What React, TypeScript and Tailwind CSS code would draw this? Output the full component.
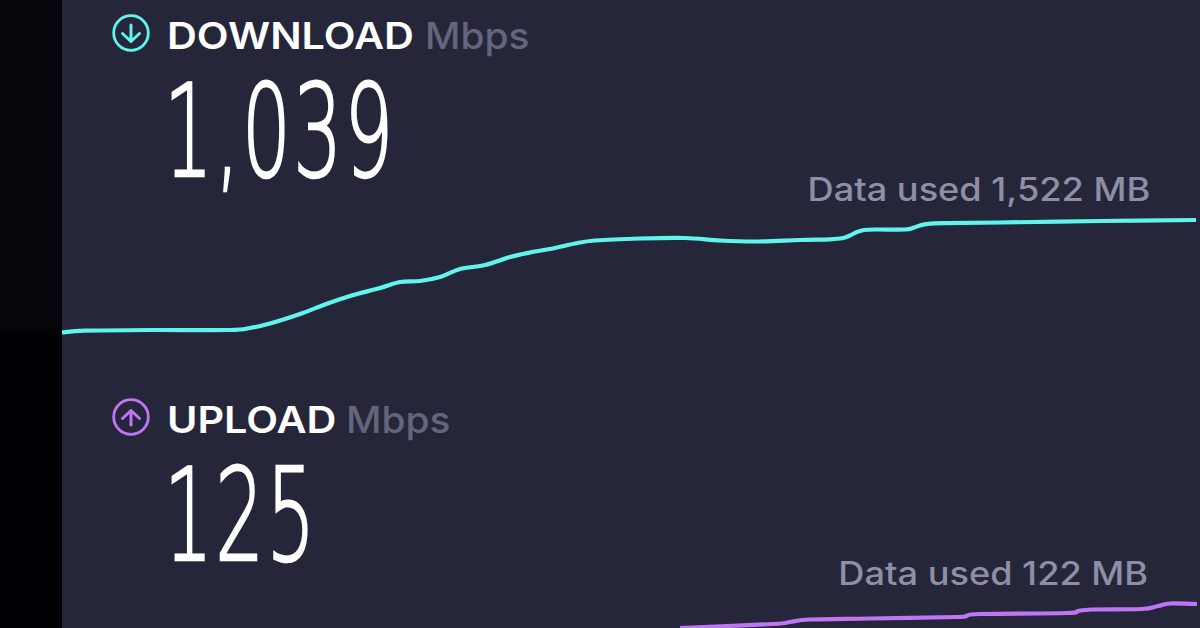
const downPts: [number, number][] = [
  [62, 332.5], [85, 330.7], [150, 330], [230, 330], [250, 328], [270, 323.5], [300, 314], [325, 304.5], [350, 296], [380, 288], [400, 282], [420, 281], [440, 277], [460, 269], [485, 265], [510, 257], [530, 252.5], [555, 248], [575, 243.5], [595, 240.5], [640, 238.5], [685, 238], [720, 240.5], [755, 241.5], [800, 240], [830, 239.3], [842, 238.3], [850, 235.5], [857, 232], [864, 230], [875, 229.5], [905, 229.5], [912, 228.3], [920, 225.5], [928, 223.8], [945, 223.2], [1000, 222.5], [1100, 221], [1196, 220],
];
const upPts: [number, number][] = [
  [680, 628], [773, 624], [790, 622], [810, 619.5], [870, 618.5], [957, 617], [967, 615.5], [980, 614], [1067, 613], [1078, 611], [1092, 609.5], [1142, 609], [1158, 606], [1170, 603.5], [1197, 604],
];

function smooth(p: [number, number][]) {
  let d = `M${p[0][0]} ${p[0][1]}`;
  for (let i = 0; i < p.length - 1; i++) {
    const a = p[Math.max(i - 1, 0)], b = p[i], c = p[i + 1], e = p[Math.min(i + 2, p.length - 1)];
    const s = 0.16;
    d += ` C${b[0] + (c[0] - a[0]) * s} ${b[1] + (c[1] - a[1]) * s} ${c[0] - (e[0] - b[0]) * s} ${c[1] - (e[1] - b[1]) * s} ${c[0]} ${c[1]}`;
  }
  return d;
}

function Section({ up, label, labelW, value, used, color, viewBox, chart, points, pad, pr }: { up: boolean; label: string; labelW: string; value: string; used: string; color: string; viewBox: string; chart: string; points: [number, number][]; pad: string; pr: string }) {
  return (
    <section className={pad}>
      <div className="flex items-center pl-[50px] h-[38px]">
        <svg width="38" height="38" viewBox="0 0 38 38" fill="none" stroke={color} strokeLinecap="round" strokeLinejoin="round" className="shrink-0">
          <circle cx="19" cy="19" r="17.3" strokeWidth="2.8" />
          {up ? (
            <path d="M19 27V12.5M10.5 20.5L19 12.5L27.5 20.5" strokeWidth="3" />
          ) : (
            <path d="M19 11V27.5M10.5 19.5L19 27.5L27.5 19.5" strokeWidth="3" />
          )}
        </svg>
        <span className={`ml-[17px] ${labelW} shrink-0 origin-left scale-x-[1.118] text-[37px] leading-[38px] font-semibold text-white font-['Inter','Liberation_Sans',sans-serif] mt-[6px] whitespace-nowrap`}>{label}</span>
        <span className="origin-left scale-x-[1.05] text-[37px] leading-[38px] font-medium text-[#63657a] font-['Inter','Liberation_Sans',sans-serif] mt-[6px] whitespace-nowrap">Mbps</span>
      </div>
      <div className={`flex justify-between items-end ${pr} h-[153px]`}>
        <span className="ml-[102px] text-[128px] leading-[136px] font-extralight tracking-[4px] text-white origin-bottom-left scale-x-[0.6] [-webkit-text-stroke:2.6px_white] font-['DejaVu_Sans','Liberation_Sans',sans-serif] mb-[5px] whitespace-nowrap">{value}</span>
        <span className="origin-right scale-x-[1.13] mb-[-3px] text-[32px] leading-[36px] font-medium text-[#8e8fa6] font-['Inter','Liberation_Sans',sans-serif] whitespace-nowrap">{used}</span>
      </div>
      <svg className="block" width="1138" viewBox={viewBox} height={chart} fill="none">
        <path d={smooth(points)} stroke={color} strokeWidth="4.2" strokeLinecap="butt" strokeLinejoin="round" />
      </svg>
    </section>
  );
}

export default function App() {
  return (
    <div className="flex h-[628px] w-[1200px] overflow-hidden bg-[#25263a]">
      <div className="flex w-[62px] shrink-0 flex-col">
        <div className="h-[329px] bg-[#05050c]" />
        <div className="flex-1 bg-[#000005]" />
      </div>
      <main className="flex-1">
        <Section up={false} label="DOWNLOAD" labelW="w-[258px]" value="1,039" used="Data used 1,522 MB" color="#5ff5ec" viewBox="62 205 1138 193" chart="193" points={downPts} pad="pt-[14px]" pr="pr-[50px]" />
        <Section up label="UPLOAD" labelW="w-[179px]" value="125" used="Data used 122 MB" color="#bf75f5" viewBox="62 589 1138 39" chart="39" points={upPts} pad="" pr="pr-[52px]" />
      </main>
    </div>
  );
}
